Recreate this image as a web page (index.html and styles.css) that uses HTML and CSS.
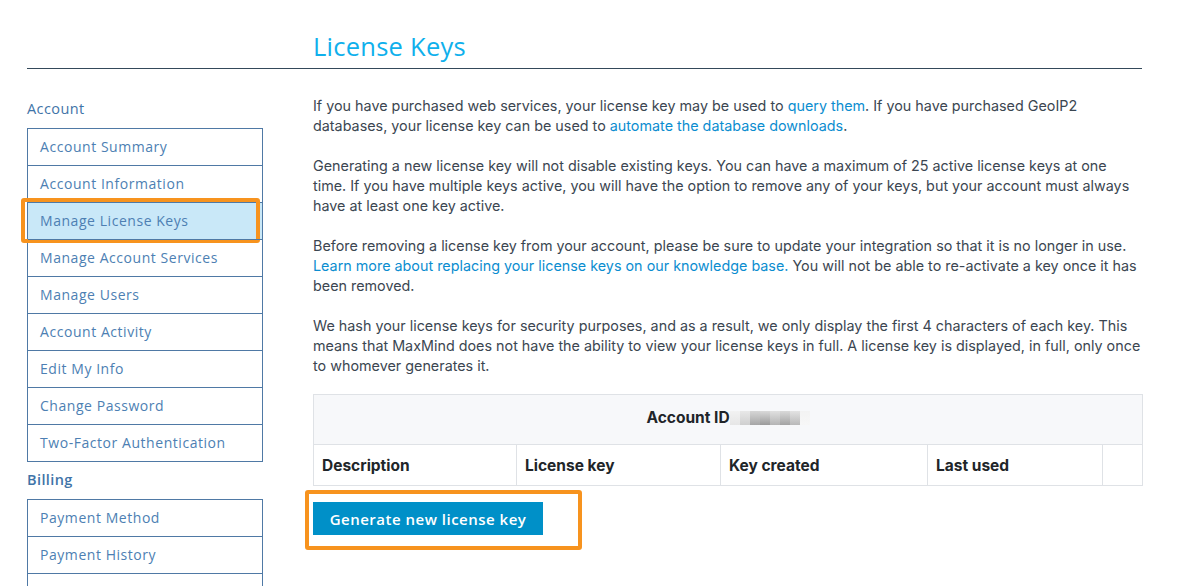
FILE: index.html
```html
<!DOCTYPE html>
<html lang="en">
<head>
<meta charset="utf-8">
<title>License Keys</title>
<link rel="stylesheet" href="styles.css">
</head>
<body>
<div class="page">
  <header class="page-head">
    <div></div>
    <h1 class="title">License Keys</h1>
  </header>
  <div class="main">
    <aside class="sidebar">
      <h2 class="side-heading">Account</h2>
      <ul class="side-list">
        <li class="side-item">Account Summary</li>
        <li class="side-item">Account Information</li>
        <li class="side-item active">Manage License Keys<span class="mark mark-nav"></span></li>
        <li class="side-item">Manage Account Services</li>
        <li class="side-item">Manage Users</li>
        <li class="side-item">Account Activity</li>
        <li class="side-item">Edit My Info</li>
        <li class="side-item">Change Password</li>
        <li class="side-item">Two-Factor Authentication</li>
      </ul>
      <h2 class="side-heading billing">Billing</h2>
      <ul class="side-list">
        <li class="side-item">Payment Method</li>
        <li class="side-item">Payment History</li>
        <li class="side-item">Invoices</li>
      </ul>
    </aside>
    <section class="content">
      <p>If you have purchased web services, your license key may be used to <a href="#">query them</a>. If you have purchased GeoIP2 databases, your license key can be used to <a href="#">automate the database downloads</a>.</p>
      <p>Generating a new license key will not disable existing keys. You can have a maximum of 25 active license keys at one time. If you have multiple keys active, you will have the option to remove any of your keys, but your account must always have at least one key active.</p>
      <p>Before removing a license key from your account, please be sure to update your integration so that it is no longer in use. <a href="#">Learn more about replacing your license keys on our knowledge base.</a> You will not be able to re-activate a key once it has been removed.</p>
      <p class="last">We hash your license keys for security purposes, and as a result, we only display the first 4 characters of each key. This means that MaxMind does not have the ability to view your license keys in full. A license key is displayed, in full, only once to whomever generates it.</p>
      <table class="keys">
        <thead>
          <tr class="acct-row">
            <th colspan="5">Account ID<span class="blur"><i class="b1"></i><i class="b2"></i><i class="b3"></i><i class="b4"></i><i class="b5"></i><i class="b6"></i><i class="b7"></i><i class="b8"></i></span></th>
          </tr>
          <tr class="col-row">
            <th class="c1">Description</th>
            <th class="c2">License key</th>
            <th class="c3">Key created</th>
            <th class="c4">Last used</th>
            <th class="c5"></th>
          </tr>
        </thead>
      </table>
      <div class="actions">
        <button class="btn" type="button">Generate new license key<span class="mark mark-btn"></span></button>
      </div>
    </section>
  </div>
</div>
</body>
</html>
```

FILE: styles.css
```css
* { box-sizing: border-box; }
html, body { margin: 0; padding: 0; background: #fff; }
body { font-family: Inter, "Noto Sans", sans-serif; color: #3b4651; overflow: hidden; height: 586px; }

.page { width: 1142px; padding-left: 27px; }

.page-head {
  display: grid;
  grid-template-columns: 286px 1fr;
  border-bottom: 1px solid #34495a;
  height: 69px;
  padding-top: 30px;
}
.title {
  margin: 0;
  font-family: "Open Sans", sans-serif;
  font-weight: 400;
  font-size: 25.5px;
  line-height: 32px;
  color: #0fb0ec;
  letter-spacing: 0.25px;
}

.main {
  display: grid;
  grid-template-columns: 236px 1fr;
  column-gap: 50px;
}

.sidebar { padding-top: 30px; }
.side-heading {
  margin: 0 0 9px;
  font-family: "Open Sans", sans-serif;
  font-weight: 500;
  font-size: 14.5px;
  line-height: 20px;
  color: #3f74a8;
  letter-spacing: 0.4px;
}
.side-heading.billing { margin: 8px 0 9px; font-weight: 600; }
.side-list {
  list-style: none;
  margin: 0;
  padding: 0;
  border: 1px solid #4f79a5;
}
.side-item {
  position: relative;
  height: 37px;
  line-height: 36px;
  padding-left: 12px;
  border-top: 1px solid #4f79a5;
  font-family: "Open Sans", sans-serif;
  font-size: 14px;
  color: #4d7fb3;
  letter-spacing: 0.55px;
  white-space: nowrap;
}
.side-item:first-child { border-top: 0; height: 36px; }
.side-item.active { background: #c9e8f8; }

.mark {
  position: absolute;
  border: 4px solid #f7931e;
  border-radius: 3px;
  pointer-events: none;
}
.mark-nav { left: -7px; top: -5px; width: 239px; height: 45px; }

.content { padding-top: 27px; }
.content p {
  margin: 0 0 20px;
  font-size: 14.35px;
  line-height: 20px;
}
.content p.last { margin-bottom: 0; }
.content a { color: #0b8dd0; text-decoration: none; }

.keys {
  width: 830px;
  border-collapse: collapse;
  margin-top: 18px;
  color: #212529;
}
.keys th {
  border: 1px solid #dfe2e6;
  text-align: left;
  font-size: 15.5px;
  font-weight: 700;
  padding: 0 8px;
}
.acct-row th {
  height: 50px;
  background: #f7f8fa;
  text-align: center;
  padding: 0 0 4px;
}
.col-row th { height: 41px; padding-top: 1px; }
.c1 { width: 203px; }
.c2 { width: 204px; }
.c3 { width: 207px; }
.c4 { width: 175px; }
.c5 { width: 40px; }

.blur {
  display: inline-flex;
  vertical-align: -2px;
  height: 14px;
}
.blur i { display: block; width: 10px; height: 14px; }
.b1 { background: linear-gradient(#f2f2f2, #e6e6e6); }
.b2 { background: linear-gradient(#e8e8e8, #cfcfcf); }
.b3 { background: linear-gradient(#d6d6d6, #a6a6a6); }
.b4 { background: linear-gradient(#d9d9d9, #9a9a9a); }
.b5 { background: linear-gradient(#e0e0e0, #b4b4b4); }
.b6 { background: linear-gradient(#d9d9d9, #a3a3a3); }
.b7 { background: linear-gradient(#e3e3e3, #b9b9b9); }
.b8 { background: linear-gradient(#f3f3f3, #f7f7f7); }

.actions { padding-top: 16px; }
.btn {
  position: relative;
  height: 33px;
  width: 230px;
  border: 0;
  background: #0090c8;
  color: #fff;
  font-family: "Open Sans", sans-serif;
  font-size: 15px;
  font-weight: 600;
  letter-spacing: 0.5px;
  padding: 0;
}
.mark-btn { left: -8px; top: -12px; width: 277px; height: 60px; }
```
